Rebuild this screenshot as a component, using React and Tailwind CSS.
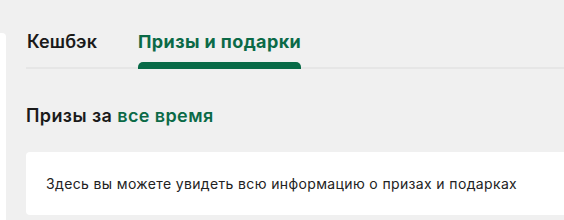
import React from 'react';

const tabs = [
  { label: 'Кешбэк', active: false },
  { label: 'Призы и подарки', active: true },
];

export default function App() {
  return (
    <div className="w-[564px] h-[220px] overflow-hidden bg-[#f0f0f0] flex" style={{ fontFamily: 'Inter, "Noto Sans", sans-serif' }}>
      {/* sidebar edge */}
      <div className="w-[6px] shrink-0 mt-[33px] bg-white rounded-tr-[4px]" />
      <div className="flex-1 pl-[20px] pt-[29px]">
        {/* Tabs */}
        <div className="flex gap-[41px] border-b-2 border-[#e6e6e6] pl-[1px]">
          {tabs.map(t => (
            <div key={t.label} className="relative flex flex-col items-stretch">
              <span className={`text-[18px] leading-[26px] ${t.active ? 'font-bold text-[#0b6a47] tracking-[0.4px]' : 'font-semibold text-[#1a1a1a] tracking-[0.1px]'}`}>
                {t.label}
              </span>
              <div className={`h-[7px] mt-[7px] -mb-[2px] rounded-t-[5px] ${t.active ? 'bg-[#086a47]' : 'bg-transparent'}`} />
            </div>
          ))}
        </div>
        {/* Heading */}
        <h2 className="mt-[34px] text-[18px] leading-[26px] font-semibold text-[#1a1a1a] tracking-[0.4px]">
          Призы за <span className="text-[#0b6a47]">все время</span>
        </h2>
        {/* Card */}
        <div className="mt-[23px] w-[560px] h-[63px] bg-white rounded-[4px] flex items-center pl-[20px]">
          <p className="text-[14px] text-[#222222] tracking-[0.36px]">
            Здесь вы можете увидеть всю информацию о призах и подарках
          </p>
        </div>
      </div>
    </div>
  );
}
